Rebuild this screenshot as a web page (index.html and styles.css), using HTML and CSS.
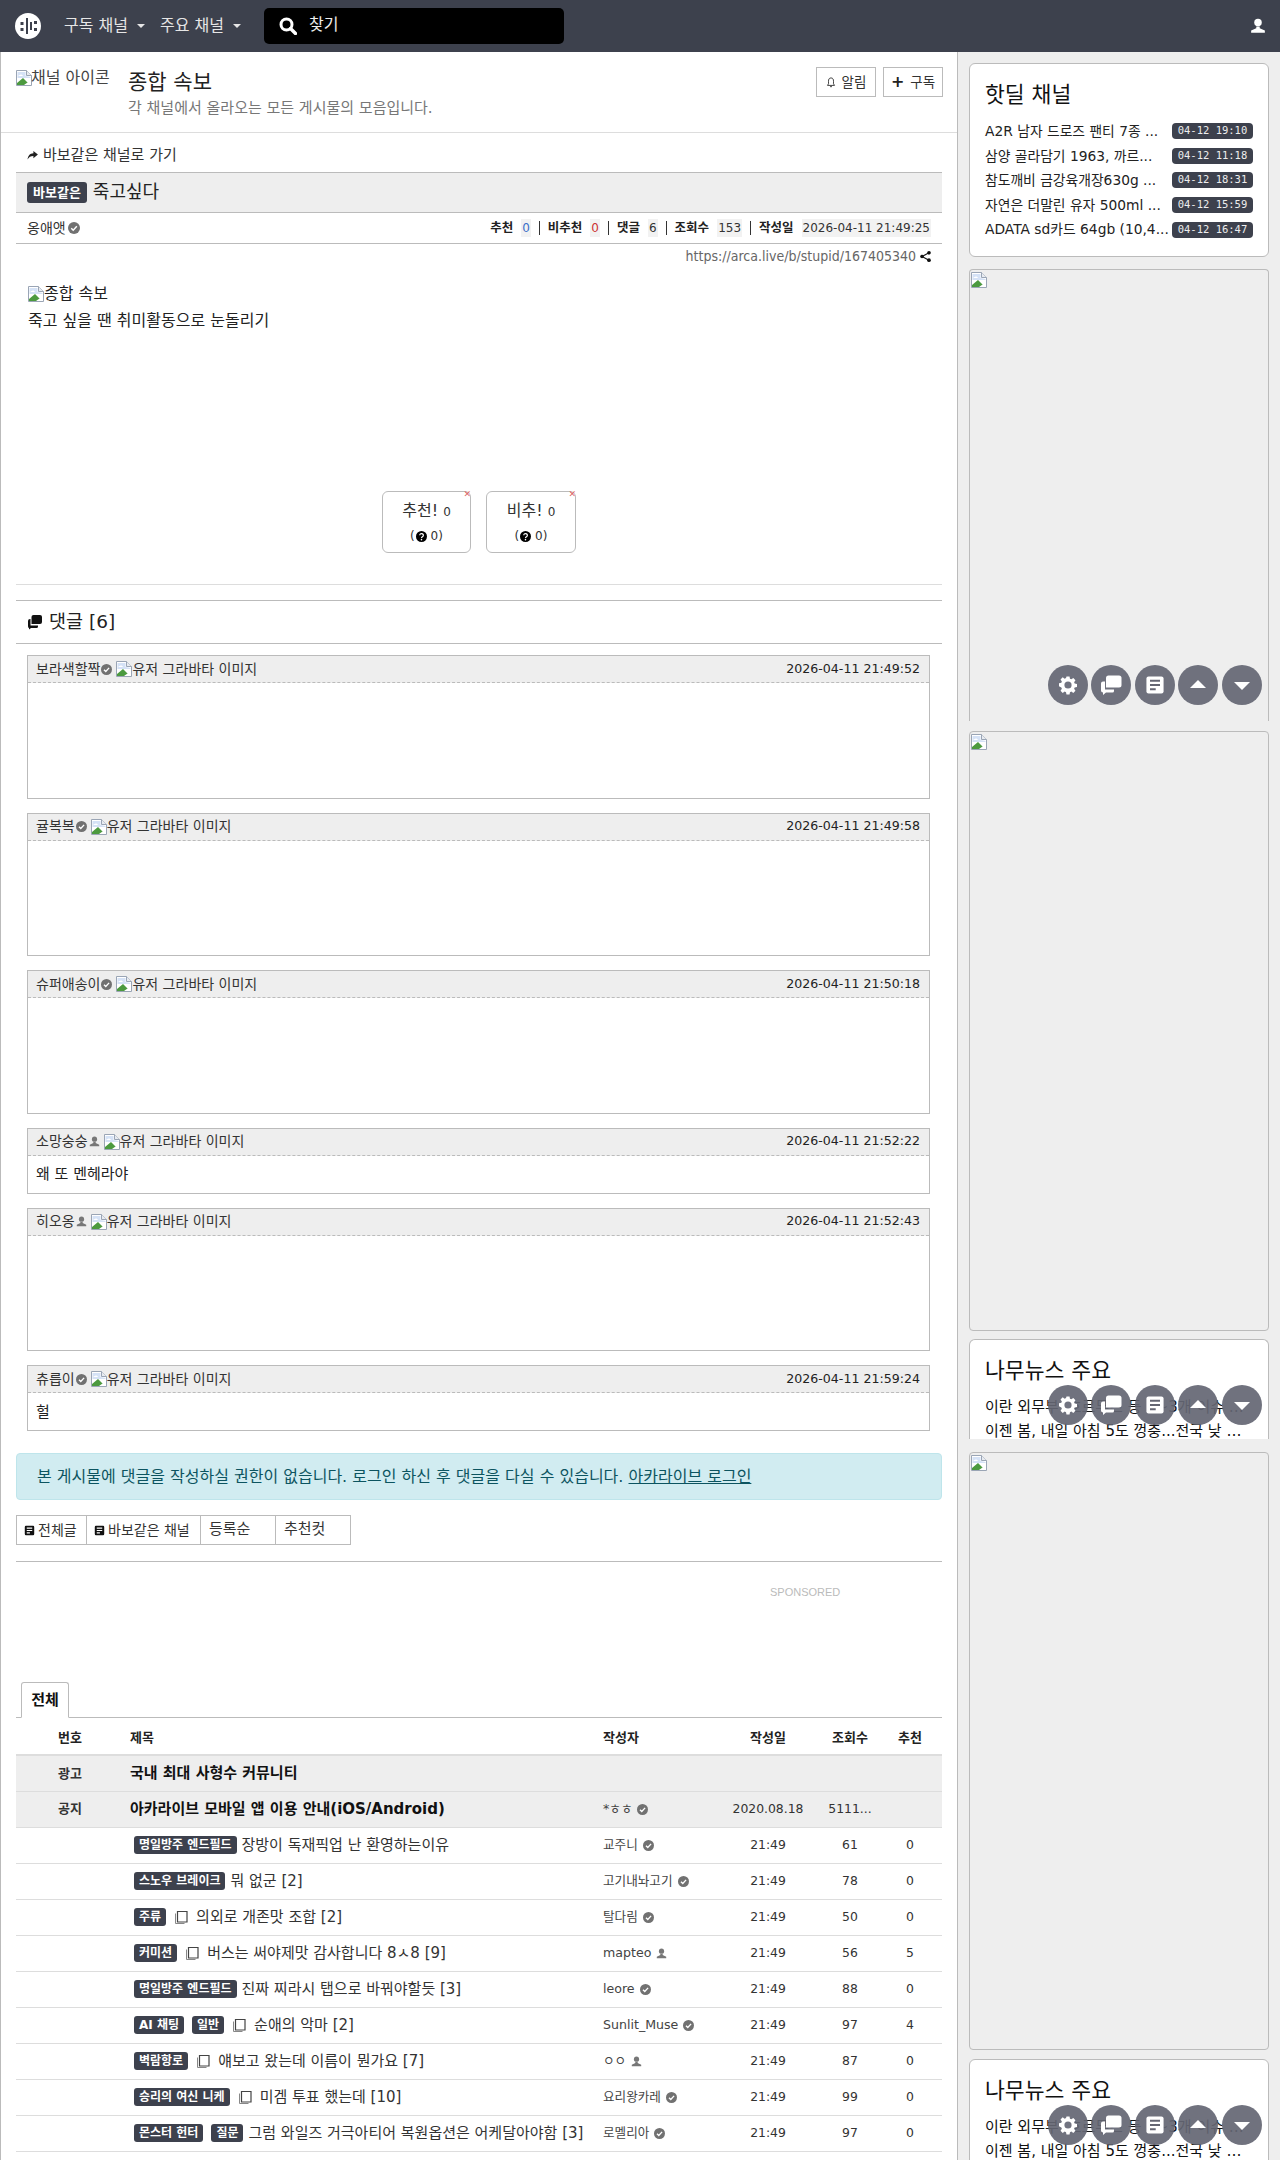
FILE: index.html
```html
<!DOCTYPE html>
<html lang="ko">
<head>
<meta charset="utf-8">
<title>종합 속보</title>
<link rel="stylesheet" href="styles.css">
</head>
<body>
<svg class="defs" width="0" height="0" aria-hidden="true">
  <defs>
    <symbol id="broken" viewBox="0 0 16 16">
      <path d="M.5.5h10l5 5v10H.5z" fill="#fff" stroke="#9aa5b5"/>
      <path d="M10.5.5v5h5" fill="#e8ebf0" stroke="#9aa5b5"/>
      <path d="M1.500 2h8v4l5 1v1h-13z" fill="#d5e2f6"/>
      <path d="M2 6c2-2 4-2 5 0z" fill="#fff"/>
      <path d="M1 15v-2l6-5 4 4 4 3z" fill="#4c9a3f"/>
      <path d="M8 15l7-5v5z" fill="#fff"/>
    </symbol>
    <symbol id="check" viewBox="0 0 14 14">
      <circle cx="7" cy="7" r="7" fill="#717171"/>
      <path d="M3.8 7.2l2.3 2.3 4.2-4.6" fill="none" stroke="#fff" stroke-width="1.7"/>
    </symbol>
    <symbol id="user" viewBox="0 0 14 14">
      <circle cx="7" cy="4" r="3.3" fill="currentColor"/>
      <path d="M5.5 7.5h3v1.5l4.5 2v2H1v-2l4.500-2z" fill="currentColor"/>
    </symbol>
    <symbol id="clip" viewBox="0 0 14 14">
      <path d="M3.500 1.500h9.500v10.500h-9.500z" fill="none" stroke="#444" stroke-width="1.200"/>
      <path d="M1.500 3.500v10h9" fill="none" stroke="#888"/>
    </symbol>
    <symbol id="doc" viewBox="0 0 14 14">
      <path d="M1 2.500Q1 1 2.500 1h9Q13 1 13 2.500v9q0 1.500-1.500 1.500h-9Q1 13 1 11.500z" fill="currentColor"/>
      <path d="M3.500 4h7M3.500 7h7M3.500 10h4" stroke="var(--doc-line,#fff)" stroke-width="1.400"/>
    </symbol>
    <symbol id="qmark" viewBox="0 0 14 14">
      <circle cx="7" cy="7" r="7" fill="#000"/>
      <path d="M4.800 5.400a2.300 2.100 0 1 1 3.400 1.900c-.8.500-1.200.8-1.200 1.600" fill="none" stroke="#fff" stroke-width="1.500"/>
      <circle cx="7" cy="11" r="1" fill="#fff"/>
    </symbol>
    <symbol id="gear" viewBox="0 0 20 20">
      <path d="M8.300 1h3.400l.5 2.600 1.500.7 2.200-1.500 2.400 2.400-1.500 2.200.6 1.500 2.600.5v3.400l-2.600.5-.6 1.500 1.500 2.200-2.400 2.400-2.200-1.500-1.500.6-.5 2.600H8.300l-.5-2.600-1.500-.6-2.200 1.500-2.400-2.400 1.500-2.200-.6-1.500L0 12V8.600l2.600-.5.6-1.500-1.500-2.200 2.400-2.400 2.200 1.500 1.500-.7z" fill="#fff" transform="translate(1 .5) scale(.9)"/>
      <circle cx="10" cy="10" r="3.600" fill="#717380"/>
    </symbol>
    <symbol id="chat" viewBox="0 0 22 20">
      <path d="M1 8.500q0-2 2-2h2v8h9v1.500q0 1.500-1.500 1.500H6l-3 2.500v-2.500q-2 0-2-2z" fill="#fff"/>
      <path d="M6 3q0-2.500 2.500-2.500h10.500q2.500 0 2.500 2.500v7q0 2.500-2.500 2.500H6z" fill="#fff"/>
    </symbol>
  </defs>
</svg>

<nav class="topbar">
  <svg class="logo" viewBox="0 0 26 26" width="26" height="26">
    <circle cx="13" cy="13" r="13" fill="#fff"/>
    <path d="M11.500 5v16h2V5zM15.500 9h2v8h-2z" fill="#3d414d" transform="translate(-.5 0)"/>
    <path d="M5.500 9h3v3h-3zM5.500 15h3v3h-3zM19 8h3v3h-3zM19 15h3v3h-3z" fill="#3d414d"/>
  </svg>
  <a class="nav-link">구독 채널<i class="caret"></i></a>
  <a class="nav-link">주요 채널<i class="caret"></i></a>
  <div class="search">
    <svg viewBox="0 0 18 18" width="18" height="18"><circle cx="7.500" cy="7.500" r="5.500" fill="none" stroke="#fff" stroke-width="3"/><path d="M11.500 11.500l5 5" stroke="#fff" stroke-width="3.400" stroke-linecap="round"/></svg>
    <span>찾기</span>
  </div>
  <svg class="nav-user" width="16" height="16"><use href="#user"/></svg>
</nav>

<div class="layout">
  <main class="main">
    <header class="channel">
      <div class="channel-icon"><svg class="broken" width="16" height="16"><use href="#broken"/></svg>채널 아이콘</div>
      <div class="channel-text">
        <h1>종합 속보</h1>
        <p>각 채널에서 올라오는 모든 게시물의 모음입니다.</p>
      </div>
      <div class="channel-actions">
        <a class="outline-btn"><svg viewBox="0 0 12 14" width="10" height="13"><path d="M6 1.500c-2.500 0-3 2-3 4v3L1.800 10.500h8.400L9 8.500v-3c0-2-.5-4-3-4zM4.800 12h2.400" fill="none" stroke="#222" stroke-width="1"/></svg>알림</a>
        <a class="outline-btn"><b class="plus">+</b>구독</a>
      </div>
    </header>

    <section class="article">
      <div class="back"><svg viewBox="0 0 12 10" width="11" height="9"><path d="M7 0l5 4-5 4V5.500C4 5.500 2 6.500.5 9.500 1 5.500 3 2.700 7 2.500z" fill="#222"/></svg>바보같은 채널로 가기</div>
      <div class="title-bar"><span class="badge">바보같은</span><span class="title-text">죽고싶다</span></div>
      <div class="info-row">
        <span class="author">옹애앳<svg class="ico-check" width="12" height="12"><use href="#check"/></svg></span>
        <span class="stats">
          <b>추천</b><em class="val blue">0</em><i class="sep"></i>
          <b>비추천</b><em class="val red">0</em><i class="sep"></i>
          <b>댓글</b><em class="val">6</em><i class="sep"></i>
          <b>조회수</b><em class="val">153</em><i class="sep"></i>
          <b>작성일</b><em class="val">2026-04-11 21:49:25</em>
        </span>
      </div>
      <div class="url-row">https://arca.live/b/stupid/167405340<svg viewBox="0 0 12 12" width="11" height="11"><circle cx="9.800" cy="2" r="2" fill="#111"/><circle cx="9.800" cy="10" r="2" fill="#111"/><circle cx="2.200" cy="6" r="2" fill="#111"/><path d="M9.800 2L2.200 6l7.600 4" fill="none" stroke="#111" stroke-width="1.200"/></svg></div>
      <div class="body-text">
        <p class="alt-line"><svg class="broken" width="16" height="16"><use href="#broken"/></svg>종합 속보</p>
        <p>죽고 싶을 땐 취미활동으로 눈돌리기</p>
      </div>
      <div class="votes">
        <div class="vote v1"><span class="x">✕</span><div class="vote-main">추천! <small>0</small></div><div class="vote-sub">(<svg width="11" height="11"><use href="#qmark"/></svg> 0)</div></div>
        <div class="vote v2"><span class="x">✕</span><div class="vote-main">비추! <small>0</small></div><div class="vote-sub">(<svg width="11" height="11"><use href="#qmark"/></svg> 0)</div></div>
      </div>
      <div class="votes-rule"></div>
      <h2 class="comments-title"><svg viewBox="1 1 14 15" width="16" height="15"><path d="M1 7q0-2 2-2h.5v6.500H11v1q0 1.500-1.500 1.500H4l-2 1.500V14q-1 0-1-2z" fill="#111"/><path d="M4.500 3q0-2 2-2H13q2 0 2 2v5q0 2-2 2H4.500z" fill="#111"/></svg>댓글 [6]</h2>

      <div class="comment"><div class="c-head"><span class="c-user">보라색할짝<svg class="ico-check" width="11" height="11"><use href="#check"/></svg></span><svg class="broken" width="16" height="16"><use href="#broken"/></svg><span>유저 그라바타 이미지</span><time>2026-04-11 21:49:52</time></div><div class="c-body tall"></div></div>
      <div class="comment"><div class="c-head"><span class="c-user">귤복복<svg class="ico-check" width="11" height="11"><use href="#check"/></svg></span><svg class="broken" width="16" height="16"><use href="#broken"/></svg><span>유저 그라바타 이미지</span><time>2026-04-11 21:49:58</time></div><div class="c-body tall"></div></div>
      <div class="comment"><div class="c-head"><span class="c-user">슈퍼애송이<svg class="ico-check" width="11" height="11"><use href="#check"/></svg></span><svg class="broken" width="16" height="16"><use href="#broken"/></svg><span>유저 그라바타 이미지</span><time>2026-04-11 21:50:18</time></div><div class="c-body tall"></div></div>
      <div class="comment"><div class="c-head"><span class="c-user">소망숭숭<svg class="ico-user" width="11" height="11"><use href="#user"/></svg></span><svg class="broken" width="16" height="16"><use href="#broken"/></svg><span>유저 그라바타 이미지</span><time>2026-04-11 21:52:22</time></div><div class="c-body">왜 또 멘헤라야</div></div>
      <div class="comment"><div class="c-head"><span class="c-user">히오옹<svg class="ico-user" width="11" height="11"><use href="#user"/></svg></span><svg class="broken" width="16" height="16"><use href="#broken"/></svg><span>유저 그라바타 이미지</span><time>2026-04-11 21:52:43</time></div><div class="c-body tall"></div></div>
      <div class="comment"><div class="c-head"><span class="c-user">츄릅이<svg class="ico-check" width="11" height="11"><use href="#check"/></svg></span><svg class="broken" width="16" height="16"><use href="#broken"/></svg><span>유저 그라바타 이미지</span><time>2026-04-11 21:59:24</time></div><div class="c-body">헐</div></div>

      <div class="alert">본 게시물에 댓글을 작성하실 권한이 없습니다. 로그인 하신 후 댓글을 다실 수 있습니다. <a>아카라이브 로그인</a></div>

      <div class="filters">
        <a class="f1"><svg width="11" height="11"><use href="#doc"/></svg>전체글</a>
        <a class="f2"><svg width="11" height="11"><use href="#doc"/></svg>바보같은 채널</a>
        <a class="f3">등록순</a>
        <a class="f3">추천컷</a>
      </div>
      <div class="sponsored-wrap"><span class="sponsored">SPONSORED</span></div>
      <div class="tabs"><a class="tab">전체</a></div>

      <table class="board">
        <colgroup><col class="c1"><col class="c2"><col class="c3"><col class="c4"><col class="c5"><col class="c6"></colgroup>
        <thead><tr><th class="ct">번호</th><th class="lt">제목</th><th class="lt">작성자</th><th class="ct">작성일</th><th class="ct">조회수</th><th class="ct">추천</th></tr></thead>
        <tbody>
          <tr class="notice h-ad"><td class="ct b">광고</td><td class="lt subject">국내 최대 사형수 커뮤니티</td><td></td><td></td><td></td><td></td></tr>
          <tr class="notice"><td class="ct b">공지</td><td class="lt subject">아카라이브 모바일 앱 이용 안내(iOS/Android)</td><td class="lt writer">*ㅎㅎ<svg width="11" height="11"><use href="#check"/></svg></td><td class="ct">2020.08.18</td><td class="ct">5111...</td><td></td></tr>
          <tr><td></td><td class="lt t"><span class="tag">명일방주 엔드필드</span>장방이 독재픽업 난 환영하는이유</td><td class="lt writer">교주니<svg width="11" height="11"><use href="#check"/></svg></td><td class="ct">21:49</td><td class="ct">61</td><td class="ct">0</td></tr>
          <tr><td></td><td class="lt t"><span class="tag">스노우 브레이크</span>뭐 없군 [2]</td><td class="lt writer">고기내놔고기<svg width="11" height="11"><use href="#check"/></svg></td><td class="ct">21:49</td><td class="ct">78</td><td class="ct">0</td></tr>
          <tr><td></td><td class="lt t"><span class="tag">주류</span><svg class="clip" width="14" height="14"><use href="#clip"/></svg>의외로 개존맛 조합 [2]</td><td class="lt writer">탈다림<svg width="11" height="11"><use href="#check"/></svg></td><td class="ct">21:49</td><td class="ct">50</td><td class="ct">0</td></tr>
          <tr><td></td><td class="lt t"><span class="tag">커미션</span><svg class="clip" width="14" height="14"><use href="#clip"/></svg>버스는 써야제맛 감사합니다 8ㅅ8 [9]</td><td class="lt writer">mapteo<svg class="u" width="11" height="11"><use href="#user"/></svg></td><td class="ct">21:49</td><td class="ct">56</td><td class="ct">5</td></tr>
          <tr><td></td><td class="lt t"><span class="tag">명일방주 엔드필드</span>진짜 찌라시 탭으로 바꿔야할듯 [3]</td><td class="lt writer">leore<svg width="11" height="11"><use href="#check"/></svg></td><td class="ct">21:49</td><td class="ct">88</td><td class="ct">0</td></tr>
          <tr><td></td><td class="lt t"><span class="tag">AI 채팅</span><span class="tag">일반</span><svg class="clip" width="14" height="14"><use href="#clip"/></svg>순애의 악마 [2]</td><td class="lt writer">Sunlit_Muse<svg width="11" height="11"><use href="#check"/></svg></td><td class="ct">21:49</td><td class="ct">97</td><td class="ct">4</td></tr>
          <tr><td></td><td class="lt t"><span class="tag">벽람항로</span><svg class="clip" width="14" height="14"><use href="#clip"/></svg>얘보고 왔는데 이름이 뭔가요 [7]</td><td class="lt writer">ㅇㅇ<svg class="u" width="11" height="11"><use href="#user"/></svg></td><td class="ct">21:49</td><td class="ct">87</td><td class="ct">0</td></tr>
          <tr><td></td><td class="lt t"><span class="tag">승리의 여신 니케</span><svg class="clip" width="14" height="14"><use href="#clip"/></svg>미겜 투표 했는데 [10]</td><td class="lt writer">요리왕카레<svg width="11" height="11"><use href="#check"/></svg></td><td class="ct">21:49</td><td class="ct">99</td><td class="ct">0</td></tr>
          <tr><td></td><td class="lt t"><span class="tag">몬스터 헌터</span><span class="tag">질문</span>그럼 와일즈 거극아티어 복원옵션은 어케달아야함 [3]</td><td class="lt writer">로멜리아<svg width="11" height="11"><use href="#check"/></svg></td><td class="ct">21:49</td><td class="ct">97</td><td class="ct">0</td></tr>
        </tbody>
      </table>
    </section>
  </main>

  <aside class="side">
    <div class="card deals">
      <h3>핫딜 채널</h3>
      <div class="deal"><span>A2R 남자 드로즈 팬티 7종 ...</span><time>04-12 19:10</time></div>
      <div class="deal"><span>삼양 골라담기 1963, 까르...</span><time>04-12 11:18</time></div>
      <div class="deal"><span>참도깨비 금강육개장630g ...</span><time>04-12 18:31</time></div>
      <div class="deal"><span>자연은 더말린 유자 500ml ...</span><time>04-12 15:59</time></div>
      <div class="deal"><span>ADATA sd카드 64gb (10,4...</span><time>04-12 16:47</time></div>
    </div>
    <div class="ad a1"><svg class="broken-ad" width="16" height="16"><use href="#broken"/></svg></div>
    <div class="ad a2"><svg class="broken-ad" width="16" height="16"><use href="#broken"/></svg></div>
    <div class="card news n1">
      <h3>나무뉴스 주요</h3>
      <div class="news-row">이란 외무부 '호르무즈 등 2~3개 이슈 협상 진행중'</div>
      <div class="news-row">이젠 봄, 내일 아침 5도 껑충...전국 낮 최고 20도 안팎</div>
    </div>
    <div class="ad a3"><svg class="broken-ad" width="16" height="16"><use href="#broken"/></svg></div>
    <div class="card news n2">
      <h3>나무뉴스 주요</h3>
      <div class="news-row">이란 외무부 '호르무즈 등 2~3개 이슈 협상 진행중'</div>
      <div class="news-row">이젠 봄, 내일 아침 5도 껑충...전국 낮 최고 20도 안팎</div>
    </div>
  </aside>
</div>

<div class="fabs f-a">
  <a class="fab"><svg width="20" height="20"><use href="#gear"/></svg></a><a class="fab"><svg width="22" height="20"><use href="#chat"/></svg></a><a class="fab doc"><svg width="20" height="20"><use href="#doc"/></svg></a><a class="fab"><i class="tri up"></i></a><a class="fab"><i class="tri down"></i></a>
</div>
<div class="fabs f-b">
  <a class="fab"><svg width="20" height="20"><use href="#gear"/></svg></a><a class="fab"><svg width="22" height="20"><use href="#chat"/></svg></a><a class="fab doc"><svg width="20" height="20"><use href="#doc"/></svg></a><a class="fab"><i class="tri up"></i></a><a class="fab"><i class="tri down"></i></a>
</div>
<div class="fabs f-c">
  <a class="fab"><svg width="20" height="20"><use href="#gear"/></svg></a><a class="fab"><svg width="22" height="20"><use href="#chat"/></svg></a><a class="fab doc"><svg width="20" height="20"><use href="#doc"/></svg></a><a class="fab"><i class="tri up"></i></a><a class="fab"><i class="tri down"></i></a>
</div>
</body>
</html>
```

FILE: styles.css
```css
* { box-sizing: border-box; }
html, body { margin: 0; padding: 0; height: 2160px; overflow: hidden; }
body {
  position: relative;
  background: #fff;
  color: #212529;
  font-family: "DejaVu Sans", "Noto Sans CJK KR", sans-serif;
  font-size: 14px;
  line-height: 1.5;
}
.defs { position: absolute; }
h1, h2, h3, p { margin: 0; font-weight: 400; }
em, i { font-style: normal; }

/* top bar */
.topbar {
  display: flex;
  align-items: center;
  height: 52px;
  background: #3d414d;
  padding-left: 15px;
  color: #eee;
}
.logo { flex: none; margin-right: 23px; }
.nav-link { display: flex; align-items: center; font-size: 16px; color: #e6e6e6; margin-right: 15px; }
.caret {
  margin-left: 9px;
  border-top: 4.500px solid #e6e6e6;
  border-left: 4px solid transparent;
  border-right: 4px solid transparent;
}
.search {
  display: flex;
  align-items: center;
  gap: 12px;
  width: 300px;
  height: 36px;
  margin-left: 8px;
  padding-left: 15px;
  background: #000;
  border-radius: 5px;
  color: #eee;
  font-size: 16px;
}
.search span { margin-top: -2px; }
.nav-user { margin-left: auto; margin-right: 14px; color: #fff; }

/* layout */
.layout { display: grid; grid-template-columns: 958px 322px; }
.main { border-left: 1px solid #bbb; border-right: 1px solid #bbb; height: 2108px; overflow: hidden; }
.broken { flex: none; vertical-align: -3px; }

.channel { position: relative; display: flex; height: 81px; padding: 15px 15px 0; border-bottom: 1px solid #ddd; }
.channel-icon { width: 95px; height: 24px; overflow: hidden; white-space: nowrap; font-size: 16px; line-height: 22px; color: #444; }
.channel-icon .broken { vertical-align: -3px; margin-right: -1px; }
.channel-text { margin-left: 17px; }
.channel-text h1 { font-size: 21px; line-height: 28px; margin-top: 1px; color: #222; }
.channel-text p { font-size: 15px; line-height: 22px; color: #777; margin-top: 1px; }
.channel-actions { position: absolute; top: 15px; right: 14px; display: flex; gap: 7px; }
.outline-btn {
  display: flex;
  align-items: center;
  justify-content: center;
  gap: 6px;
  width: 60px;
  height: 30px;
  border: 1px solid #bbb;
  font-size: 13.500px;
  color: #333;
}
.plus { font-size: 16px; line-height: 1; color: #222; }

.article { padding: 0 15px; }
.back { display: flex; align-items: center; gap: 5px; height: 39px; padding: 6px 11px 0; font-size: 15px; color: #333; }
.title-bar {
  display: flex;
  align-items: center;
  height: 41px;
  padding: 0 11px;
  background: #eee;
  border-top: 1px solid #bbb;
  border-bottom: 1px solid #bbb;
}
.badge, .tag {
  display: inline-block;
  background: #3d414d;
  color: #fff;
  border-radius: 3px;
  font-weight: 700;
}
.badge { font-size: 13px; line-height: 21px; padding: 0 6px; margin-right: 6px; }
.title-text { font-size: 18px; color: #222; margin-top: -2px; }
.info-row {
  display: flex;
  justify-content: space-between;
  align-items: center;
  height: 31px;
  padding: 0 11px;
  border-bottom: 1px solid #bbb;
  font-size: 14px;
}
.author { display: flex; align-items: center; gap: 2px; color: #333; }
.stats { display: flex; align-items: center; font-size: 12px; }
.stats b { color: #222; font-size: 12.500px; }
.val { background: #f2f2f2; color: #333; margin-left: 8px; padding: 0 1px; }
.val.blue { color: #3d6fc9; }
.val.red { color: #c33; }
.sep { width: 1px; height: 14px; background: #333; margin: 0 8px; }
.url-row {
  display: flex;
  justify-content: flex-end;
  align-items: center;
  gap: 4px;
  height: 24px;
  padding-right: 11px;
  font-size: 14px;
  color: #666;
  font-family: "DejaVu Sans Condensed", "DejaVu Sans", "Noto Sans CJK KR", sans-serif;
}
.body-text { padding: 12px 12px 0; font-size: 16px; color: #222; }
.body-text p { line-height: 27px; }
.votes { display: flex; justify-content: center; gap: 15px; margin-top: 157px; }
.vote { position: relative; width: 90px; height: 62px; border: 1px solid #bbb; border-radius: 6px; text-align: center; padding-top: 5px; color: #333; }
.vote.v1 { width: 89px; }
.vote-main { font-size: 16px; line-height: 27px; }
.vote-main small { font-size: 12px; }
.vote-sub { font-size: 12px; line-height: 20px; }
.vote-sub svg { vertical-align: -2px; margin-left: 1px; }
.x { position: absolute; right: -1px; top: -3px; font-size: 9px; line-height: 10px; color: #d66; }
.votes-rule { height: 1px; background: #ddd; margin-top: 31px; }
.comments-title {
  display: flex;
  align-items: center;
  gap: 6px;
  height: 44px;
  margin-top: 15px;
  padding-left: 11px;
  border-top: 1px solid #bbb;
  border-bottom: 1px solid #bbb;
  font-size: 18.500px;
  color: #222;
}

.comment { margin: 11px 12px 14px 11px; border: 1px solid #bbb; }
.c-head {
  display: flex;
  align-items: center;
  height: 27px;
  padding: 0 9px 0 8px;
  background: #eee;
  border-bottom: 1px dashed #bbb;
  font-size: 14px;
  color: #333;
}
.c-user { display: flex; align-items: center; gap: 1px; margin-right: 4px; }
.ico-check, .ico-user { flex: none; }
.ico-user { color: #777; }
.c-head time { margin-left: auto; color: #222; font-size: 12.600px; }
.c-body { height: 37px; padding: 1px 8px 0; display: flex; align-items: center; font-size: 15px; color: #222; }
.c-body.tall { height: 114.500px; }
.comment + .comment { margin-top: 0; }

.alert {
  height: 47px;
  margin-top: 22px;
  padding: 11px 20px;
  background: #d1ecf1;
  border: 1px solid #bee5eb;
  border-radius: 4px;
  color: #0c5460;
  font-size: 16px;
}
.alert a { text-decoration: underline; color: #0c5460; }
.filters { display: flex; height: 30px; margin-top: 15px; }
.filters a { display: flex; align-items: center; gap: 3px; height: 30px; border: 1px solid #bbb; margin-right: -1px; font-size: 14px; color: #333; }
.filters svg { color: #111; }
.f1 { width: 71px; padding-left: 7px; }
.f2 { width: 115px; padding-left: 7px; }
.filters .f3 { width: 76px; padding: 0 0 2px 8px; font-size: 15px; }
.sponsored-wrap { position: relative; height: 156px; margin-top: 16px; border-top: 1px solid #bbb; }
.sponsored { position: absolute; left: 754px; top: 22px; font-family: "Liberation Sans", sans-serif; font-size: 11px; color: #bbb; }
.tabs { height: 1px; background: #bbb; position: relative; }
.tab {
  position: absolute;
  left: 5px;
  bottom: 0;
  width: 48px;
  height: 36px;
  border: 1px solid #bbb;
  border-bottom: 1px solid #fff;
  border-radius: 3px 3px 0 0;
  background: #fff;
  text-align: center;
  font-size: 15px;
  font-weight: 700;
  line-height: 34px;
  color: #111;
}

.board { width: 926px; border-collapse: collapse; table-layout: fixed; font-size: 12.400px; }
.c1 { width: 108px; } .c2 { width: 473px; } .c3 { width: 117px; } .c4 { width: 108px; } .c5 { width: 56px; } .c6 { width: 64px; }
.board th { height: 37px; font-size: 13px; font-weight: 700; color: #222; padding: 3px 6px 0; }
.board td { height: 36px; padding: 0 6px; border-bottom: 1px solid #ddd; color: #333; white-space: nowrap; overflow: hidden; }
.ct { text-align: center; }
.lt { text-align: left; }
.board .b { font-weight: 700; font-size: 13px; }
.notice { background: #eee; }
.h-ad td { border-top: 2px solid #ddd; }
.board .subject { font-size: 15px; font-weight: 700; color: #111; }
.board .t { font-size: 15px; padding-left: 10px; color: #333; }
.tag { font-size: 12px; line-height: 18px; padding: 0 5px; margin-right: 5px; vertical-align: 1px; }
.tag + .tag { margin-left: 3px; }
.clip { vertical-align: -2px; margin: 0 8px 0 3px; }
.board .writer { font-size: 12.600px; color: #444; }
.writer svg { vertical-align: -2px; margin-left: 5px; color: #777; }

/* sidebar */
.side { position: relative; display: flex; flex-direction: column; background: #eee; height: 2108px; padding: 11px 0 0 11px; overflow: hidden; }
.card { width: 300px; background: #fff; border: 1px solid #bbb; border-radius: 6px; flex: none; }
.deals { height: 194px; padding: 11px 15px 0; }
.card h3 { font-size: 21.600px; line-height: 40px; color: #111; }
.deal { display: flex; align-items: center; gap: 2px; height: 24.600px; font-size: 13.800px; color: #222; }
.deal:first-of-type { margin-top: 4px; }
.deal span { flex: 1; min-width: 0; white-space: nowrap; }
.deal time { flex: none; width: 81px; height: 16px; background: #3d414d; color: #eee; border-radius: 4px; text-align: center; font-family: "DejaVu Sans Mono", monospace; font-size: 10.500px; line-height: 15px; }
.ad { flex: none; width: 300px; border: 1px solid #bbb; background: #eee; border-radius: 4px; }
.broken-ad { display: block; margin: 2px 0 0 1px; }
.a1 { height: 452px; margin-top: 12px; border-bottom: 0; border-radius: 4px 4px 0 0; }
.a2 { height: 600px; margin-top: 10px; }
.n1 { height: 100px; margin-top: 8px; border-bottom: 0; border-radius: 6px 6px 0 0; overflow: hidden; }
.a3 { height: 598px; margin-top: 13px; }
.n2 { height: 120px; margin-top: 9px; }
.news { padding: 11px 15px 0; overflow: hidden; }
.news-row { font-size: 15px; line-height: 24px; overflow: hidden; white-space: nowrap; text-overflow: ellipsis; color: #111; }
.news-row:first-of-type { margin-top: 4px; }

/* floating buttons */
.fabs { position: absolute; left: 1048px; display: flex; gap: 3.400px; }
.f-a { top: 665px; }
.f-b { top: 1385px; }
.f-c { top: 2105px; }
.fab { display: flex; align-items: center; justify-content: center; width: 40px; height: 40px; border-radius: 50%; background: rgba(100, 102, 115, .92); color: #fff; --doc-line: #646673; }
.tri { width: 0; height: 0; border-left: 8px solid transparent; border-right: 8px solid transparent; }
.tri.up { border-bottom: 8px solid #fff; margin-top: -2px; }
.tri.down { border-top: 8px solid #fff; margin-top: 2px; }
```
